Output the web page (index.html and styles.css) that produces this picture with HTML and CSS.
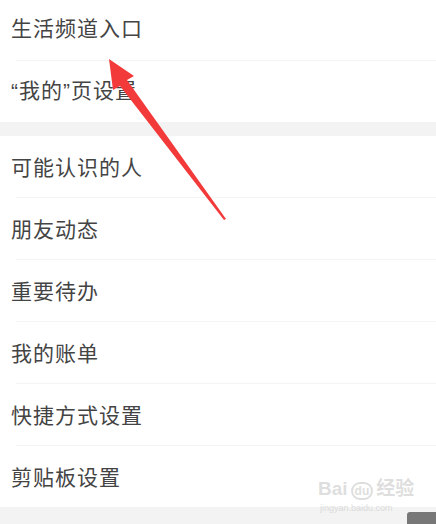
FILE: index.html
```html
<!DOCTYPE html>
<html lang="zh-CN">

<head>
    <meta charset="UTF-8">
    <meta name="viewport" content="width=device-width, initial-scale=1.0">
    <link rel="stylesheet" href="styles.css">
    <title>设置</title>
</head>

<body>
    <!-- 第一组 -->
    <div class="group group-top">
        <div class="row first"><span class="label">生活频道入口</span><i class="chev"></i></div>
        <div class="row"><span class="label">“我的”页设置</span><i class="chev"></i></div>
    </div>

    <!-- 第二组 -->
    <div class="group">
        <div class="row"><span class="label">可能认识的人</span><i class="chev"></i></div>
        <div class="row"><span class="label">朋友动态</span><i class="chev"></i></div>
        <div class="row"><span class="label">重要待办</span><i class="chev"></i></div>
        <div class="row"><span class="label">我的账单</span><i class="chev"></i></div>
        <div class="row"><span class="label">快捷方式设置</span><i class="chev"></i></div>
        <div class="row"><span class="label">剪贴板设置</span><i class="chev"></i></div>
    </div>

    <!-- 红色箭头标注 -->
    <svg class="arrow" width="436" height="524" viewBox="0 0 436 524">
        <polygon fill="#f33a3a" points="109,59 134,76 127,80 226,219 224,220 120,86 113,90" />
    </svg>

    <!-- 水印 -->
    <div class="watermark">
        <div class="wm-logo">Bai<span class="wm-du">du</span>经验</div>
        <div class="wm-url">jingyan.baidu.com</div>
    </div>

    <div class="corner"></div>
</body>

</html>
```

FILE: styles.css
```css
/* 全局样式 */
body {
    margin: 0;
    height: 524px;
    overflow: hidden;
    background-color: #f3f3f3;
    font-family: "Liberation Sans", "Noto Sans CJK SC", sans-serif;
    position: relative;
}

/* 分组 */
.group {
    background-color: #fff;
}

.group-top {
    margin-bottom: 14px;
}

.group-top .row {
    padding-bottom: 6px;
    height: 55px;
}

.group-top .row.first {
    height: 54px;
}

/* 列表行 */
.row {
    height: 59px;
    padding-bottom: 2px;
    display: flex;
    align-items: center;
    justify-content: space-between;
    padding-left: 11px;
    position: relative;
}

.row + .row {
    border-top: 1px solid #f4f4f4;
}

.row + .row::before {
    content: "";
    position: absolute;
    top: -1px;
    left: 0;
    width: 16px;
    height: 1px;
    background-color: #fff;
}

.label {
    font-size: 21px;
    color: #444;
    letter-spacing: 1px;
}

/* 右侧箭头，被屏幕边缘截掉 */
.chev {
    width: 8px;
    height: 8px;
    border-top: 2px solid #ccc;
    border-right: 2px solid #ccc;
    transform: rotate(45deg);
    margin-right: -7px;
}

/* 标注箭头 */
.arrow {
    position: absolute;
    top: 0;
    left: 0;
}

/* 水印 */
.watermark {
    position: absolute;
    left: 318px;
    top: 478px;
    color: rgba(200, 200, 200, 0.6);
    font-family: "Liberation Sans", "Noto Sans CJK SC", sans-serif;
}

.wm-logo {
    font-size: 19px;
    font-weight: bold;
    line-height: 22px;
}

.wm-du {
    font-size: 12px;
    border: 2px solid rgba(200, 200, 200, 0.6);
    border-radius: 10px;
    padding: 0 2px;
    margin: 0 3px;
}

.wm-url {
    font-size: 9px;
    line-height: 12px;
    padding-left: 2px;
}

/* 右下角深色块 */
.corner {
    position: absolute;
    right: 0;
    bottom: 0;
    width: 29px;
    height: 12px;
    background-color: #777;
    border-top-left-radius: 3px;
}
```
